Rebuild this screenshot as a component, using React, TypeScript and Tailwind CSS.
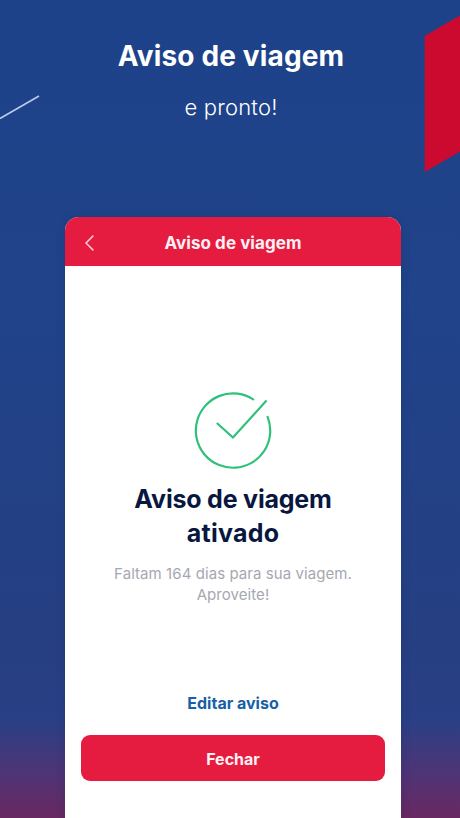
function BackIcon() {
  return (
    <svg className="h-4 w-[9px]" viewBox="0 0 9 16" fill="none" stroke="#ffc9d3" strokeWidth="1.5">
      <path d="M8.4 0.6L1 8L8.4 15.4" />
    </svg>
  )
}

function SuccessIcon() {
  return (
    <svg className="h-20 w-20" viewBox="0 0 80 80" fill="none" stroke="#2fc07c" strokeWidth="2.2">
      <path d="M60.2 10.3A37.2 37.2 0 1 0 74.6 27.8" strokeLinecap="round" />
      <path d="M23.8 34L40 48.5L73.5 11.5" />
    </svg>
  )
}

function Decorations() {
  return (
    <svg className="pointer-events-none absolute inset-0 h-[180px] w-full" viewBox="0 0 460 180">
      <path d="M0 118.5L39 96" stroke="#b9cbed" strokeWidth="1.6" />
      <path d="M424.7 36L460 15.5V151.5L424.7 172Z" fill="#cc092f" />
    </svg>
  )
}

function PhoneScreen() {
  return (
    <section className="ml-[65px] flex w-[336px] flex-1 flex-col overflow-hidden rounded-t-[14px] bg-white shadow-[0_0_10px_rgba(15,35,90,0.2)]">
      <header className="grid h-[49px] grid-cols-[50px_1fr_50px] items-center bg-[#e51c40]">
        <button className="flex h-full items-center pt-[3px] pl-[20px]" aria-label="Voltar">
          <BackIcon />
        </button>
        <h2 className="pt-[4px] text-center text-[17px] font-bold tracking-[0.05px] whitespace-nowrap text-[#fff1f3]">
          Aviso de viagem
        </h2>
      </header>
      <main className="flex flex-1 flex-col items-center px-4 pt-[123px]">
        <SuccessIcon />
        <h3 className="mt-[13px] text-center text-[25px] leading-[34px] font-bold tracking-[-0.2px] text-[#08173f]">
          Aviso de viagem
          <br />
          <span className="tracking-[0.25px]">ativado</span>
        </h3>
        <p className="mt-[13px] text-center text-[15px] leading-[21px] tracking-[0.07px] whitespace-nowrap text-[#a6a8b1]">
          Faltam 164 dias para sua viagem.
          <br />
          Aproveite!
        </p>
        <button className="mt-[86px] h-6 text-[16px] leading-6 font-bold text-[#1760a5]">Editar aviso</button>
        <button className="mt-[19.5px] h-[46px] w-full rounded-[9px] bg-[#e51c40] pt-0.5 text-[16px] font-bold text-[#fff1f3]">
          Fechar
        </button>
      </main>
    </section>
  )
}

export default function App() {
  return (
    <div className="relative flex h-[818px] w-[460px] flex-col overflow-hidden bg-[linear-gradient(180deg,#1e4289_0px,#20438a_300px,#263f82_650px,#2a3f85_720px,#4c3577_770px,#692861_818px)] font-[Inter,sans-serif]">
      <Decorations />
      <div className="flex h-[217px] flex-col items-center pt-[38px] pl-[2px] text-white">
        <h1 className="text-[28px] leading-9 font-bold tracking-[0.15px]">Aviso de viagem</h1>
        <p className="mt-[19px] text-[22px] leading-7 font-light tracking-[0.2px]">e pronto!</p>
      </div>
      <PhoneScreen />
    </div>
  )
}
